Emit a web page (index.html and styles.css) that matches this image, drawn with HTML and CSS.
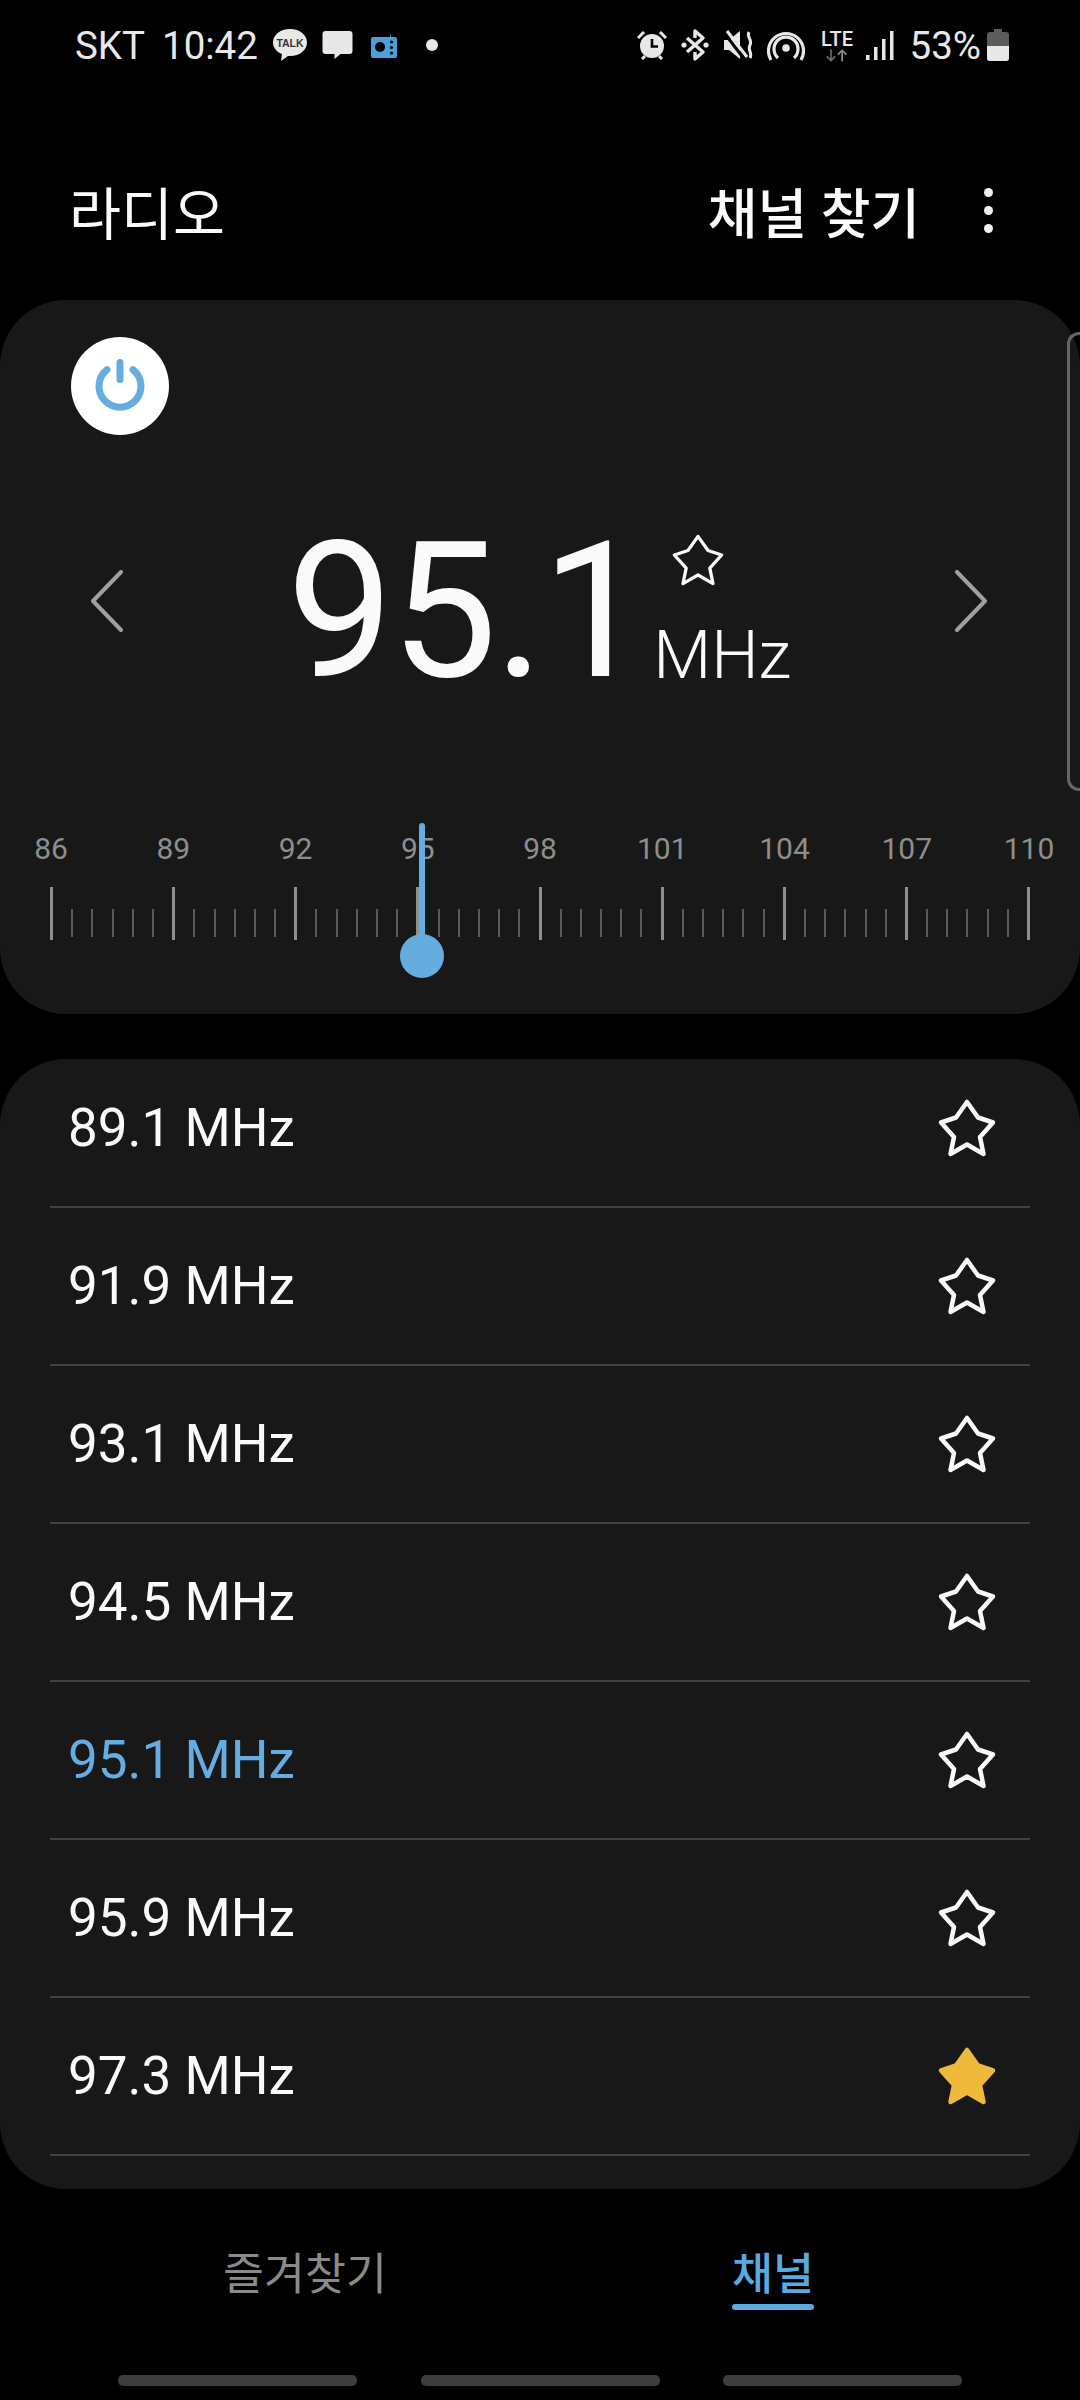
FILE: index.html
```html
<!DOCTYPE html>
<html lang="ko">
<head>
    <meta charset="UTF-8">
    <meta name="viewport" content="width=device-width, initial-scale=1.0">
    <title>라디오</title>
    <link rel="stylesheet" href="styles.css">
</head>
<body>
    <svg class="defs" width="0" height="0">
        <symbol id="star" viewBox="0 0 66 66">
            <path d="M33 7 L44 22.500 L59 27.500 L46 42 L49.500 59 L33 49.500 L16.500 59 L20 42 L7 27.500 L22 22.500 Z" stroke-linejoin="round"/>
        </symbol>
    </svg>

    <div class="status">
        <div class="status-left">
            <span class="carrier">SKT</span>
            <span class="clock">10:42</span>
            <svg class="ic ic-talk" viewBox="0 0 36 36"><path d="M18 2C8 2 1 8 1 15.500C1 21 5 25 10 27L9 34L16 29C17 29 17.500 29 18 29C28 29 35 23 35 15.500C35 8 28 2 18 2Z" fill="#e8e8e8"/><text x="18" y="20" class="talk-text">TALK</text></svg>
            <svg class="ic ic-msg" viewBox="0 0 30 30"><path d="M3 1H27A3 3 0 0 1 30 4V21A3 3 0 0 1 27 24H18L12 29V24H3A3 3 0 0 1 0 21V4A3 3 0 0 1 3 1Z" fill="#e8e8e8"/></svg>
            <svg class="ic ic-radio" viewBox="0 0 26 26"><path d="M2 5H19L20 0.500V5H24A2 2 0 0 1 26 7V24A2 2 0 0 1 24 26H2A2 2 0 0 1 0 24V7A2 2 0 0 1 2 5Z" fill="#4c9fdc"/><circle cx="9" cy="15" r="5" fill="#000"/><circle cx="20.500" cy="10" r="1.600" fill="#000"/><circle cx="20.500" cy="15.500" r="1.600" fill="#000"/><circle cx="20.500" cy="21" r="1.600" fill="#000"/></svg>
            <span class="dot"></span>
        </div>
        <div class="status-right">
            <svg class="ic ic-alarm" viewBox="0 0 30 30"><circle cx="15" cy="16" r="12" fill="#e8e8e8"/><path d="M15 9V16.500H21" fill="none" stroke="#000" stroke-width="2.600"/><path d="M1 8L7 2M29 8L23 2M5 29L8 26M25 29L22 26" stroke="#e8e8e8" stroke-width="3" fill="none"/></svg>
            <svg class="ic ic-bt" viewBox="0 0 28 32"><path d="M14 9L14 2L22 9L6 23M14 23L14 30L22 23L6 9" fill="none" stroke="#e8e8e8" stroke-width="3.400" stroke-linejoin="round"/><circle cx="3" cy="16" r="2.600" fill="#e8e8e8"/><circle cx="25" cy="16" r="2.600" fill="#e8e8e8"/></svg>
            <svg class="ic ic-mute" viewBox="0 0 30 32"><path d="M0 11H5L16 2V30L5 21H0Z" fill="#e8e8e8"/><path d="M1 5L21 31" stroke="#000" stroke-width="3"/><path d="M3 2L23 28" stroke="#e8e8e8" stroke-width="3"/><path d="M25 3C22 8 29 11 26 16C23 21 29 24 26 29" fill="none" stroke="#e8e8e8" stroke-width="3"/></svg>
            <svg class="ic ic-hotspot" viewBox="0 0 38 32"><circle cx="19" cy="19" r="3.800" fill="#e8e8e8"/><path d="M11 29A12 12 0 1 1 27 29" fill="none" stroke="#e8e8e8" stroke-width="3.200"/><path d="M4 31A17.500 17.500 0 1 1 34 31" fill="none" stroke="#e8e8e8" stroke-width="3.200"/></svg>
            <div class="lte">
                <span class="lte-label">LTE</span>
                <svg class="lte-arrows" viewBox="0 0 28 14"><path d="M7 0V12M2 8L7 13L12 8" fill="none" stroke="#6a6a6a" stroke-width="2"/><path d="M20 14V2M15 6L20 1L25 6" fill="none" stroke="#8a8a8a" stroke-width="2"/></svg>
            </div>
            <svg class="ic ic-signal" viewBox="0 0 28 30"><rect x="0" y="25" width="3.500" height="5" fill="#e8e8e8"/><rect x="8" y="17" width="3.500" height="13" fill="#e8e8e8"/><rect x="16" y="9" width="3.500" height="21" fill="#e8e8e8"/><rect x="24" y="1" width="3.500" height="29" fill="#e8e8e8"/></svg>
            <span class="battery-pct">53%</span>
            <svg class="ic ic-battery" viewBox="0 0 22 32"><path d="M7 0H15V3H19A3 3 0 0 1 22 6V29A3 3 0 0 1 19 32H3A3 3 0 0 1 0 29V6A3 3 0 0 1 3 3H7Z" fill="#5c5c5c"/><path d="M0 17H22V29A3 3 0 0 1 19 32H3A3 3 0 0 1 0 29Z" fill="#e8e8e8"/></svg>
        </div>
    </div>

    <header class="topbar">
        <h1 class="title">라디오</h1>
        <button class="scan">채널 찾기</button>
        <div class="more"><span></span><span></span><span></span></div>
    </header>

    <section class="tuner">
        <div class="power">
            <svg viewBox="0 0 60 60" width="60" height="60"><path d="M17 13.700A21 21 0 1 0 43 13.700" fill="none" stroke="#65ade0" stroke-width="7" stroke-linecap="round"/><path d="M30 6.500V23.500" stroke="#65ade0" stroke-width="7" stroke-linecap="round"/></svg>
        </div>
        <div class="freq-row">
            <svg class="chevron" viewBox="0 0 34 62"><path d="M31 2L3 31L31 60" fill="none" stroke="#a0a0a0" stroke-width="4" stroke-linecap="round" stroke-linejoin="round"/></svg>
            <div class="freq">
                <span class="freq-num">95.1</span>
                <div class="freq-side">
                    <svg class="star star-small"><use href="#star"/></svg>
                    <span class="freq-unit">MHz</span>
                </div>
            </div>
            <svg class="chevron" viewBox="0 0 34 62"><path d="M3 2L31 31L3 60" fill="none" stroke="#a0a0a0" stroke-width="4" stroke-linecap="round" stroke-linejoin="round"/></svg>
        </div>
        <div class="ruler">
            <div class="ruler-labels">
                <span>86</span><span>89</span><span>92</span><span>95</span><span>98</span><span>101</span><span>104</span><span>107</span><span>110</span>
            </div>
            <div class="ticks">
                <i class="major"></i><i></i><i></i><i></i><i></i><i></i>
                <i class="major"></i><i></i><i></i><i></i><i></i><i></i>
                <i class="major"></i><i></i><i></i><i></i><i></i><i></i>
                <i class="major"></i><i></i><i></i><i></i><i></i><i></i>
                <i class="major"></i><i></i><i></i><i></i><i></i><i></i>
                <i class="major"></i><i></i><i></i><i></i><i></i><i></i>
                <i class="major"></i><i></i><i></i><i></i><i></i><i></i>
                <i class="major"></i><i></i><i></i><i></i><i></i><i></i>
                <i class="major"></i>
            </div>
            <div class="needle"></div>
            <div class="knob"></div>
        </div>
        <div class="scrollhint"></div>
    </section>

    <section class="channels">
        <div class="channel-row"><span>89.1 MHz</span><svg class="star"><use href="#star"/></svg></div>
        <div class="channel-row"><span>91.9 MHz</span><svg class="star"><use href="#star"/></svg></div>
        <div class="channel-row"><span>93.1 MHz</span><svg class="star"><use href="#star"/></svg></div>
        <div class="channel-row"><span>94.5 MHz</span><svg class="star"><use href="#star"/></svg></div>
        <div class="channel-row active"><span>95.1 MHz</span><svg class="star"><use href="#star"/></svg></div>
        <div class="channel-row"><span>95.9 MHz</span><svg class="star"><use href="#star"/></svg></div>
        <div class="channel-row"><span>97.3 MHz</span><svg class="star star-on"><use href="#star"/></svg></div>
    </section>

    <nav class="tabs">
        <div class="tab"><span>즐겨찾기</span></div>
        <div class="tab tab-on"><span>채널</span></div>
    </nav>

    <div class="navbar"><span></span><span></span><span></span></div>
</body>
</html>
```

FILE: styles.css
```css
* {
    box-sizing: border-box;
}
html, body {
    margin: 0;
    padding: 0;
}
body {
    width: 1080px;
    height: 2400px;
    overflow: hidden;
    background: #000;
    color: #fafafa;
    font-family: Roboto, "Noto Sans CJK KR", sans-serif;
}
.defs {
    position: absolute;
}

.status {
    height: 90px;
    display: flex;
    justify-content: space-between;
    align-items: center;
    padding: 0 71px 0 75px;
    color: #e8e8e8;
    font-size: 38.5px;
}
.status-left, .status-right {
    display: flex;
    align-items: center;
}
.ic {
    display: block;
}
.carrier {
    margin-right: 17px;
}
.clock {
    margin-right: 14px;
}
.ic-talk {
    width: 36px;
    height: 36px;
    margin-right: 14px;
}
.talk-text {
    font-family: "Liberation Sans", sans-serif;
    font-size: 10.5px;
    font-weight: 700;
    text-anchor: middle;
    fill: #333;
}
.ic-msg {
    width: 31px;
    height: 30px;
    margin-right: 18px;
}
.ic-radio {
    width: 26px;
    height: 26px;
    margin-right: 29px;
}
.dot {
    width: 12px;
    height: 12px;
    border-radius: 50%;
    background: #e8e8e8;
}
.ic-alarm {
    width: 30px;
    height: 30px;
    margin-right: 14px;
}
.ic-bt {
    width: 28px;
    height: 32px;
    margin-right: 15px;
}
.ic-mute {
    width: 30px;
    height: 32px;
    margin-right: 13px;
}
.ic-hotspot {
    width: 38px;
    height: 32px;
    margin-right: 15px;
}
.lte {
    width: 35px;
    margin-right: 11px;
    display: flex;
    flex-direction: column;
    align-items: center;
}
.lte-label {
    font-size: 20px;
    line-height: 20px;
    font-weight: 500;
}
.lte-arrows {
    width: 24px;
    height: 13px;
}
.ic-signal {
    width: 28px;
    height: 30px;
    margin-right: 16px;
}
.battery-pct {
    margin-right: 6px;
}
.ic-battery {
    width: 22px;
    height: 32px;
}

.topbar {
    height: 118px;
    display: flex;
    align-items: center;
    padding: 0 0 0 69px;
    margin-top: 61px;
}
.title {
    flex: 1;
    margin: 0;
    font-size: 56.5px;
    font-weight: 400;
}
.scan {
    padding: 0;
    border: none;
    background: none;
    color: #fafafa;
    font-family: inherit;
    font-size: 54px;
    font-weight: 500;
    margin-right: 64px;
}
.more {
    width: 10px;
    margin-right: 86px;
    display: flex;
    flex-direction: column;
    gap: 9px;
}
.more span {
    width: 9px;
    height: 9px;
    border-radius: 50%;
    background: #f0f0f0;
}

.tuner {
    position: relative;
    height: 714px;
    margin-top: 31px;
    padding-top: 37px;
    background: #181818;
    border-radius: 66px;
}
.power {
    width: 98px;
    height: 98px;
    margin-left: 71px;
    border-radius: 50%;
    background: #fff;
    display: flex;
    align-items: center;
    justify-content: center;
}
.freq-row {
    height: 180px;
    margin-top: 76px;
    padding: 0 92px 0 90px;
    display: flex;
    align-items: center;
    justify-content: space-between;
}
.chevron {
    width: 34px;
    height: 62px;
}
.freq {
    display: flex;
    align-items: flex-end;
    gap: 8px;
    margin-top: 20px;
}
.freq-num {
    font-size: 190px;
    line-height: 190px;
    letter-spacing: -3px;
}
.freq-side {
    display: flex;
    flex-direction: column;
    align-items: center;
    margin-bottom: 18px;
}
.freq-unit {
    font-size: 67px;
    font-weight: 300;
    line-height: 66px;
}
.star {
    width: 66px;
    height: 66px;
    display: block;
    fill: none;
    stroke: #fafafa;
    stroke-width: 4.5;
}
.star-small {
    width: 60px;
    height: 60px;
    margin-bottom: 32px;
    margin-right: 48px;
    stroke-width: 3.6;
}
.star-on {
    fill: #efb93c;
    stroke: #efb93c;
}

.ruler {
    position: relative;
    margin: 132px 50px 0;
    padding-top: 8px;
}
.ruler-labels {
    display: flex;
    justify-content: space-between;
    height: 36px;
    font-size: 30px;
    line-height: 36px;
    color: #8e8e8e;
}
.ruler-labels span {
    width: 2px;
    display: flex;
    justify-content: center;
}
.ticks {
    display: flex;
    justify-content: space-between;
    align-items: flex-start;
    margin-top: 20px;
    height: 54px;
}
.ticks i {
    width: 2px;
    height: 28px;
    margin-top: 22px;
    background: #5a5a5a;
}
.ticks i.major {
    width: 3px;
    height: 53px;
    margin-top: 0;
    background: #8f8f8f;
}
.needle {
    position: absolute;
    left: 369px;
    top: 0;
    width: 6px;
    height: 130px;
    border-radius: 3px;
    background: #65ade0;
}
.knob {
    position: absolute;
    left: 350px;
    top: 111px;
    width: 44px;
    height: 44px;
    border-radius: 50%;
    background: #65ade0;
}
.scrollhint {
    position: absolute;
    right: 0;
    top: 32px;
    width: 13px;
    height: 459px;
    border: 3px solid #666;
    border-right: none;
    border-radius: 12px 0 0 12px;
}

.channels {
    height: 1130px;
    margin-top: 45px;
    background: #181818;
    border-radius: 66px;
    overflow: hidden;
    padding: 0 50px;
}
.channel-row {
    height: 158px;
    display: flex;
    align-items: center;
    justify-content: space-between;
    padding: 0 30px 0 18px;
    border-bottom: 2px solid #404040;
    font-size: 53px;
}
.channel-row:first-child {
    height: 149px;
    margin-top: 0;
}
.channel-row:first-child span,
.channel-row:first-child svg {
    position: relative;
    top: -5px;
}
.channel-row.active span {
    color: #65ade0;
}

.tabs {
    display: flex;
    height: 132px;
    padding: 56px 73px 0 71px;
}
.tab {
    flex: 1;
    text-align: center;
    font-size: 44.5px;
    line-height: 60px;
    color: #8a8a8a;
}
.tab span {
    display: inline-block;
    position: relative;
}
.tab-on {
    color: #5aa9e2;
    font-weight: 500;
}
.tab-on span::after {
    content: "";
    position: absolute;
    left: 0;
    right: 0;
    top: 59px;
    height: 6px;
    border-radius: 3px;
    background: #5aa9e2;
}

.navbar {
    display: flex;
    gap: 63.5px;
    padding: 0 0 0 118px;
    margin-top: 54px;
}
.navbar span {
    width: 239px;
    height: 11px;
    border-radius: 5px;
    background: #3c3c3c;
}
```
